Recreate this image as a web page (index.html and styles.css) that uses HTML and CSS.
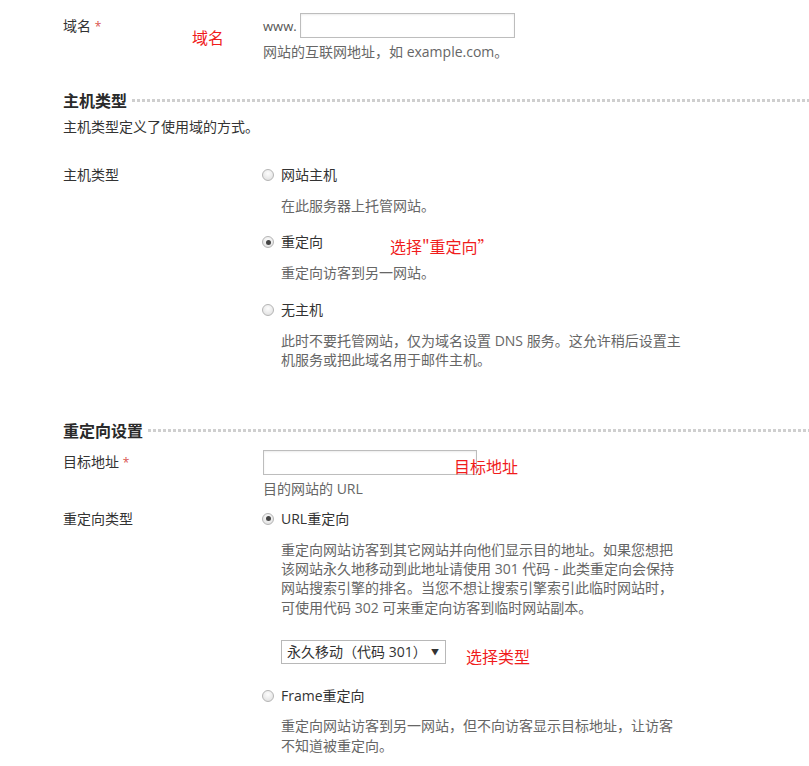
FILE: index.html
```html
<!DOCTYPE html>
<html lang="zh-CN">
<head>
<meta charset="utf-8">
<title>重定向设置</title>
<link rel="stylesheet" href="styles.css">
</head>
<body>
<div class="page">
  <div class="row row-domain">
    <div class="label">域名 <span class="req">*</span></div>
    <div class="field">
      <div class="www-line"><span class="prefix">www.</span><span class="input input-domain"></span></div>
      <div class="hint">网站的互联网地址，如 example.com。</div>
    </div>
  </div>

  <div class="section-head sh-host"><span class="legend">主机类型</span><span class="dots"></span></div>
  <div class="section-desc">主机类型定义了使用域的方式。</div>

  <div class="row row-hosttype">
    <div class="label">主机类型</div>
    <div class="field">
      <div class="option"><span class="radio"></span><span class="opt-text">网站主机</span></div>
      <div class="opt-desc">在此服务器上托管网站。</div>
      <div class="option opt-gap"><span class="radio checked"></span><span class="opt-text">重定向</span></div>
      <div class="opt-desc">重定向访客到另一网站。</div>
      <div class="option opt-gap"><span class="radio"></span><span class="opt-text">无主机</span></div>
      <div class="opt-desc">此时不要托管网站，仅为域名设置 DNS 服务。这允许稍后设置主机服务或把此域名用于邮件主机。</div>
    </div>
  </div>

  <div class="section-head sh-redirect"><span class="legend">重定向设置</span><span class="dots"></span></div>

  <div class="row row-target">
    <div class="label">目标地址 <span class="req">*</span></div>
    <div class="field">
      <span class="input input-target"></span>
      <div class="hint">目的网站的 URL</div>
    </div>
  </div>

  <div class="row row-rtype">
    <div class="label">重定向类型</div>
    <div class="field">
      <div class="option"><span class="radio checked"></span><span class="opt-text">URL重定向</span></div>
      <div class="opt-desc">重定向网站访客到其它网站并向他们显示目的地址。如果您想把该网站永久地移动到此地址请使用 301 代码 - 此类重定向会保持网站搜索引擎的排名。当您不想让搜索引擎索引此临时网站时，可使用代码 302 可来重定向访客到临时网站副本。</div>
      <div class="select"><span class="select-text">永久移动（代码 301）</span><span class="arrow">▼</span></div>
      <div class="option opt-frame"><span class="radio"></span><span class="opt-text">Frame重定向</span></div>
      <div class="opt-desc desc-frame">重定向网站访客到另一网站，但不向访客显示目标地址，让访客不知道被重定向。</div>
    </div>
  </div>

  <div class="note note-domain">域名</div>
  <div class="note note-redirect">选择"重定向”</div>
  <div class="note note-target">目标地址</div>
  <div class="note note-type">选择类型</div>
</div>
</body>
</html>
```

FILE: styles.css
```css
* { box-sizing: border-box; }
html, body { margin: 0; padding: 0; background: #fff; }
body {
  font-family: "Open Sans", "Noto Sans CJK SC", sans-serif;
  font-size: 14px;
  line-height: 20px;
  color: #333;
}
.page {
  position: relative;
  width: 809px;
  height: 766px;
  overflow: hidden;
  padding-left: 63px;
}
.row {
  display: grid;
  grid-template-columns: 200px 1fr;
}
.label { color: #333; }
.req { color: #d9534f; font-size: 12px; }
.field { display: flex; flex-direction: column; align-items: flex-start; }

.row-domain { padding-top: 13px; }
.row-domain .label { padding-top: 3px; }
.www-line { display: flex; align-items: center; gap: 3px; }
.prefix { color: #555; font-size: 13px; }
.input {
  display: block;
  height: 25px;
  border: 1px solid #bdbdbd;
  background: #fff;
  box-shadow: inset 0 1px 2px rgba(0,0,0,0.08);
}
.input-domain { width: 215px; }
.input-target { width: 214px; }
.hint { color: #666; margin-top: 4px; }

.section-head {
  display: flex;
  align-items: center;
  gap: 5px;
  height: 20px;
}
.legend { font-size: 16px; font-weight: bold; color: #2a2a2a; white-space: nowrap; }
.dots {
  flex: 1;
  height: 3px;
  margin-top: -1px;
  background-image: repeating-linear-gradient(to right, #cfcfcf 0, #cfcfcf 3px, transparent 3px, transparent 5px);
}
.sh-host { margin-top: 29px; }
.section-desc { margin-top: 6px; color: #333; }

.row-hosttype { margin-top: 28px; }
.option { display: flex; align-items: center; margin-left: -1px; }
.radio {
  width: 12px;
  height: 12px;
  border-radius: 50%;
  border: 1px solid #b5b5b5;
  background: radial-gradient(circle at 50% 35%, #fdfdfd 0, #e6e6e6 70%, #d6d6d6 100%);
  margin-right: 7px;
  position: relative;
  flex: none;
}
.radio.checked::after {
  content: "";
  position: absolute;
  left: 2.5px;
  top: 2.5px;
  width: 5px;
  height: 5px;
  border-radius: 50%;
  background: #444;
}
.opt-text { color: #333; }
.opt-desc {
  color: #666;
  margin-left: 18px;
  margin-top: 11px;
  width: 400px;
  line-height: 19.4px;
}
.opt-gap { margin-top: 17px; }

.sh-redirect { margin-top: 51px; }
.row-target { margin-top: 9px; }
.row-target .label { padding-top: 2px; }
.row-rtype { margin-top: 10px; }
.row-rtype .opt-desc { margin-top: 11px; }

.select {
  margin-left: 18px;
  margin-top: 23px;
  width: 165px;
  height: 24px;
  border: 1px solid #b8b8b8;
  background: #fff;
  display: flex;
  align-items: center;
  justify-content: space-between;
  padding: 0 6px 0 5px;
  color: #333;
}
.select-text { white-space: nowrap; }
.arrow { font-size: 8px; color: #333; }
.opt-frame { margin-top: 22px; }
.row-rtype .desc-frame { margin-top: 10px; }

.note {
  position: absolute;
  color: #f01c1c;
  font-size: 16px;
  line-height: 20px;
  font-family: "Noto Sans CJK SC", sans-serif;
  white-space: nowrap;
}
.note-domain { left: 192px; top: 27px; }
.note-redirect { left: 390px; top: 236px; }
.note-target { left: 454px; top: 456px; }
.note-type { left: 466px; top: 646px; }
```
